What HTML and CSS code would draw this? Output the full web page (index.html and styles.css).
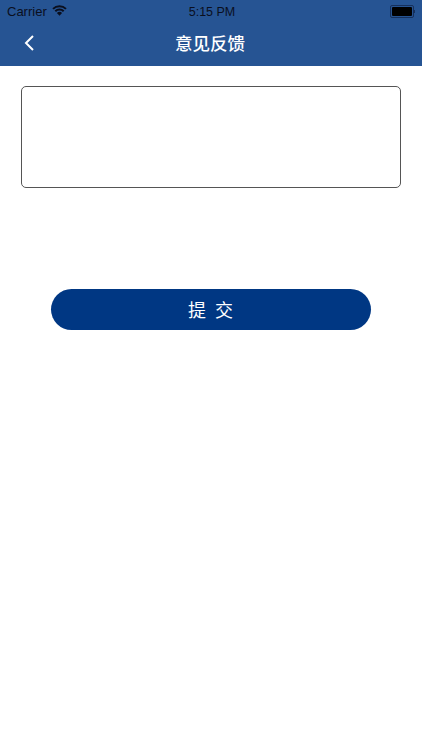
FILE: index.html
```html
<!DOCTYPE html>
<html lang="zh-CN">
<head>
    <meta charset="UTF-8">
    <meta name="viewport" content="width=device-width, initial-scale=1.0">
    <title>意见反馈</title>
    <link rel="stylesheet" href="styles.css">
</head>
<body>

    <div class="header">
        <div class="status-bar">
            <div class="status-left">
                <span>Carrier</span>
                <svg class="wifi" width="15" height="11" viewBox="0 0 15 11">
                    <path d="M7.5 10.8 L4.9 8 A3.8 3.8 0 0 1 10.1 8 Z" fill="#0a0f1e"/>
                    <path d="M3.3 6.3 A6 6 0 0 1 11.7 6.3" fill="none" stroke="#0a0f1e" stroke-width="2"/>
                    <path d="M1 3.9 A9.4 9.4 0 0 1 14 3.9" fill="none" stroke="#0a0f1e" stroke-width="2"/>
                </svg>
            </div>
            <span class="status-time">5:15 PM</span>
            <div class="status-right">
                <div class="battery"><div class="battery-level"></div></div>
                <div class="battery-tip"></div>
            </div>
        </div>
        <div class="nav-bar">
            <svg class="back" width="12" height="18" viewBox="0 0 12 18">
                <path d="M10 2 L3 9 L10 16" fill="none" stroke="#fff" stroke-width="2"/>
            </svg>
            <h1>意见反馈</h1>
        </div>
    </div>

    <div class="content">
        <textarea class="feedback"></textarea>
        <button class="submit">提 交</button>
    </div>

</body>
</html>
```

FILE: styles.css
```css
body {
    margin: 0;
    height: 750px;
    overflow: hidden;
    background-color: #fff;
    font-family: "Liberation Sans", "Noto Sans CJK SC", sans-serif;
}

.header {
    height: 66px;
    background-color: #265493;
    display: flex;
    flex-direction: column;
}

.status-bar {
    height: 22px;
    padding: 0 7px;
    display: flex;
    align-items: center;
    justify-content: space-between;
    position: relative;
    font-size: 13px;
    color: #0a0f1e;
}

.status-left {
    display: flex;
    align-items: center;
    gap: 5px;
}

.wifi {
    margin-top: -2px;
}

.status-time {
    position: absolute;
    left: 2px;
    right: 0;
    margin-top: 1px;
    text-align: center;
    font-size: 12.5px;
}

.status-right {
    display: flex;
    align-items: center;
}

.battery {
    width: 20px;
    height: 9px;
    padding: 1px;
    border: 1px solid #16305c;
    border-radius: 2px;
}

.battery-level {
    height: 100%;
    background-color: #000;
    border-radius: 1px;
}

.battery-tip {
    width: 1px;
    height: 3px;
    background-color: #16305c;
}

.nav-bar {
    flex: 1;
    position: relative;
    display: flex;
    align-items: center;
    justify-content: center;
    padding: 0 2px 4px 0;
}

.nav-bar h1 {
    margin: 0;
    font-size: 17.5px;
    font-weight: 500;
    color: #fff;
}

.back {
    position: absolute;
    left: 23px;
    top: 12px;
}

.content {
    padding: 20px 21px 0;
    display: flex;
    flex-direction: column;
    align-items: center;
}

.feedback {
    display: block;
    box-sizing: border-box;
    width: 380px;
    height: 102px;
    margin: 0;
    border: 1px solid #555;
    border-radius: 5px;
    resize: none;
    outline: none;
}

.submit {
    margin-top: 101px;
    width: 320px;
    height: 41px;
    padding: 0 0 2px 1px;
    border: none;
    border-radius: 21px;
    background-color: #003783;
    color: #fff;
    font-family: inherit;
    font-size: 18px;
    letter-spacing: 2px;
}
```
